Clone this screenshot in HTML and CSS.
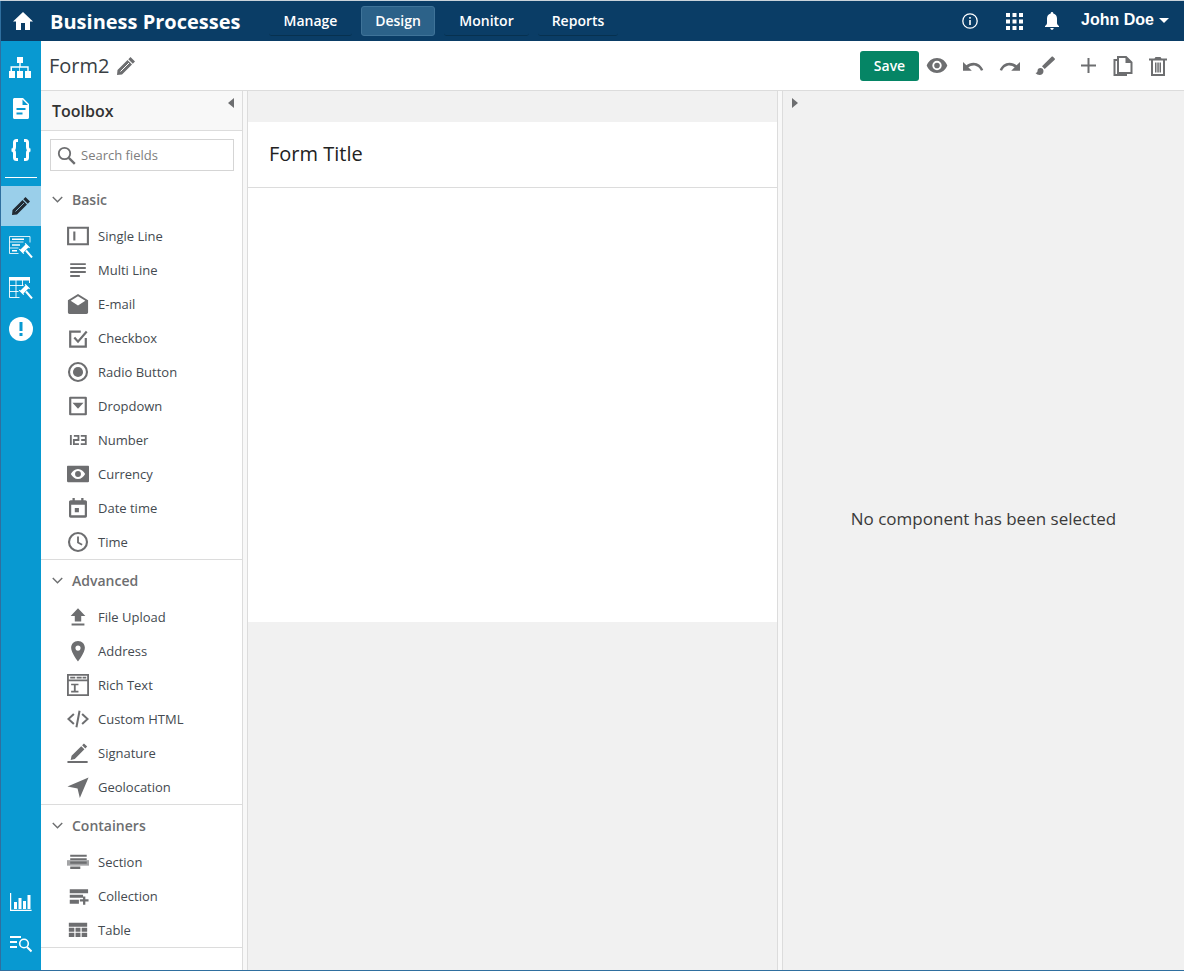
FILE: index.html
```html
<!DOCTYPE html>
<html>
  <head>
    <title>Business Processes</title>
    <link rel="stylesheet" href="styles.css">
  </head>
  <body>
    <div class="app">
      <!-- Top bar -->
      <header class="topbar">
        <svg class="home_icon" viewBox="0 0 24 24"><path d="M10 21v-7h4v7h5v-8.500h3L12 3 2 12.500h3V21z"/></svg>
        <div class="brand">Business Processes</div>
        <nav class="nav">
          <a class="nav_item nav_manage">Manage</a>
          <a class="nav_item nav_design nav_active">Design</a>
          <a class="nav_item nav_monitor">Monitor</a>
          <a class="nav_item nav_reports">Reports</a>
        </nav>
        <div class="topbar_right">
          <svg class="info_icon" viewBox="0 0 18 18"><circle cx="9" cy="9" r="7.200" fill="none" stroke="#fff" stroke-width="1.300"/><rect x="8.200" y="8" width="1.600" height="5" fill="#fff"/><rect x="8.200" y="5" width="1.600" height="1.700" fill="#fff"/></svg>
          <svg class="apps_icon" viewBox="0 0 17 17"><path d="M0 0h4v4H0zM6.500 0h4v4h-4zM13 0h4v4h-4zM0 6.500h4v4H0zM6.500 6.500h4v4h-4zM13 6.500h4v4h-4zM0 13h4v4H0zM6.500 13h4v4h-4zM13 13h4v4h-4z"/></svg>
          <svg class="bell_icon" viewBox="0 0 16 18"><path d="M8 0c-.8 0-1.300.6-1.300 1.400C4.300 2 3 4 3 6.500V11c0 1.500-1 2.400-2 3v1h14v-1c-1-.6-2-1.500-2-3V6.500c0-2.500-1.300-4.500-3.700-5.100C9.300.6 8.800 0 8 0zM6.300 16c0 1 .8 1.800 1.700 1.800s1.700-.8 1.700-1.800z"/></svg>
          <div class="user">John Doe<span class="caret"></span></div>
        </div>
      </header>

      <div class="main">
        <!-- Left rail -->
        <aside class="rail">
          <div class="rail_top">
            <div class="rail_btn">
              <svg class="rail_org" width="22" height="21" viewBox="0 0 22 21"><path class="rail_fill" d="M8 0h6v6h-2.300v3.300h8v4.700h2.300v7h-6v-7h2.300v-3.200h-7.300V14H14v7H8v-7h2.300v-3.200H3v3.200h2.300h.7v7H0v-7h1.500V9.300h8.800V6H8z"/></svg>
            </div>
            <div class="rail_btn">
              <svg width="16" height="21" viewBox="0 0 16 21"><path class="rail_fill" fill-rule="evenodd" d="M1.500 0H10l6 6v13.500c0 .8-.7 1.500-1.500 1.500h-13C.7 21 0 20.300 0 19.500v-18C0 .7.700 0 1.500 0zM9.500 1.500V7H15zM3.500 10v2h9v-2zM3.500 14.500v2h6v-2z"/></svg>
            </div>
            <div class="rail_btn">
              <svg width="24" height="22" viewBox="0 0 24 22" fill="none" stroke="#fff" stroke-width="3"><path d="M9 1.500H7.500C6 1.500 5.500 2 5.500 3.500V8c0 1.800-1 3-3 3 2 0 3 1.200 3 3v4.500c0 1.500.5 2 2 2H9M15 1.500h1.500c1.500 0 2 .5 2 2V8c0 1.800 1 3 3 3-2 0-3 1.200-3 3v4.500c0 1.500-.5 2-2 2H15"/></svg>
            </div>
            <div class="rail_sep"></div>
            <div class="rail_btn rail_active">
              <svg width="18" height="18" viewBox="0 0 18 18"><path fill="#222b33" d="M13.500 0L18 4.500l-2.200 2.200-4.500-4.500zM10.500 3L15 7.500 5 17.500 0 18l.5-5z"/><path stroke="#9acfea" stroke-width=".8" d="M3.500 14.500l8.500-8.500"/></svg>
            </div>
            <div class="rail_btn">
              <svg width="24" height="22" viewBox="0 0 24 22" fill="none" stroke="#fff"><path stroke-width="1" opacity=".85" d="M.5.500h20.500v6M.5.500v17h9M.5 6h14M.5 12h9"/><path stroke-width="1.500" d="M3 3.200h12M3 9h8M3 14.800h5"/><path fill="#fff" stroke="none" d="M16.500 7l4.500 4.500-.8.800-.8-.8-5 5 .8.800-.8.800-4.500-4.500.8-.8.800.8 5-5-.8-.800z"/><path stroke-width="2" d="M17 14.500l6 7"/></svg>
            </div>
            <div class="rail_btn">
              <svg width="24" height="22" viewBox="0 0 24 22" fill="none" stroke="#fff"><path fill="#fff" stroke="none" d="M0 0h21v3.500H0z"/><path stroke-width="1" opacity=".9" d="M.5 3v17.500h10M20.500 3v3M.5 8.500h14M.5 14.500h9M7 3v17.500M13.500 3v6"/><path fill="#fff" stroke="none" d="M16.500 7l4.500 4.500-.8.800-.8-.8-5 5 .8.800-.8.800-4.500-4.500.8-.8.800.8 5-5-.8-.800z"/><path stroke-width="2" d="M17 14.500l6 7"/></svg>
            </div>
            <div class="rail_btn">
              <svg width="24" height="24" viewBox="0 0 24 24"><circle cx="12" cy="12" r="12" fill="#fff"/><rect x="10.500" y="5" width="3" height="9" fill="#0899d1"/><rect x="10.500" y="16" width="3" height="3" fill="#0899d1"/></svg>
            </div>
          </div>
          <div class="rail_bottom">
            <svg width="22" height="19" viewBox="0 0 22 19" fill="none"><path stroke="#fff" stroke-width="1.200" d="M.6 0v17.400h21"/><path fill="#fff" d="M4 9h3v7H4zM8.500 5h3v11h-3zM13 8h3v8h-3zM17.500 2h3v14h-3z"/></svg>
            <svg width="22" height="18" viewBox="0 0 22 18" fill="none" stroke="#fff"><path stroke-width="2" d="M0 2h11M0 7h7M0 12h7"/><circle cx="14" cy="8.500" r="4.300" stroke-width="1.600"/><path stroke-width="2" d="M17 12l4.500 4.500"/></svg>
          </div>
        </aside>

        <div class="workspace">
          <!-- Form toolbar -->
          <div class="formbar">
            <div class="form_name">Form2</div>
            <svg class="form_pencil" viewBox="0 0 18 18"><path fill="#6d6e70" d="M13.500 0L18 4.500l-2.200 2.200-4.500-4.500zM10.500 3L15 7.500 5 17.500 0 18l.5-5z"/><path stroke="#fff" stroke-width="1" d="M3.500 14.500l8.500-8.500"/></svg>
            <div class="formbar_right">
              <button class="save_btn">Save</button>
              <svg class="tool_icon tool_eye" viewBox="1 0 22 16"><path fill-rule="evenodd" d="M12 0C7 0 2.700 3.200 1 8c1.700 4.800 6 8 11 8s9.300-3.200 11-8c-1.700-4.800-6-8-11-8zm0 13a5 5 0 1 1 0-10 5 5 0 0 1 0 10zm0-8a3 3 0 1 0 0 6 3 3 0 0 0 0-6z"/></svg>
              <svg class="tool_icon tool_undo" viewBox="0 0 22 12"><path d="M11 2.500C8 2.500 5.500 3.600 3.600 5.300L0 1.800V11h9.200L5.600 7.400c1.400-1.200 3.300-2 5.400-2 3.600 0 6.700 2.400 7.800 5.600l2.400-.8C19.700 5.800 15.700 2.500 11 2.500z"/></svg>
              <svg class="tool_icon tool_redo" viewBox="0 0 22 12"><path d="M11 2.500c3 0 5.500 1.100 7.400 2.800L22 1.800V11h-9.200l3.600-3.600c-1.400-1.200-3.300-2-5.400-2-3.600 0-6.700 2.400-7.800 5.600L.8 10.200C2.300 5.800 6.300 2.500 11 2.500z"/></svg>
              <svg class="tool_icon tool_brush" viewBox="0 0 20 20"><path d="M5.500 12C3.600 12 2.500 13.300 2.500 15c0 1.300-1.100 2-2 2 .9 1.300 2.700 2 4 2 2.400 0 4-1.600 4-4 0-1.700-1.300-3-3-3zM19.700 2.400L18 .7c-.4-.4-1-.4-1.400 0L7 10.300l2.700 2.700 10-9.300c.4-.4.400-1 0-1.300z"/></svg>
              <svg class="tool_icon tool_plus" viewBox="0 0 15 15"><path d="M6.500 0h2v6.500H15v2H8.500V15h-2V8.500H0v-2h6.500z"/></svg>
              <svg class="tool_icon tool_copy" viewBox="0 0 20 20"><path fill="none" stroke="#6d6e70" stroke-width="2" d="M5 4H1.500v15H13v-2M5 1v16h13.500V6.500L13 1z"/><path d="M12.500 1l6 6h-6z"/></svg>
              <svg class="tool_icon tool_trash" viewBox="0 0 18 20"><path fill="none" stroke="#6d6e70" stroke-width="2" d="M3 4v15h12V4"/><path d="M0 2.500h5.500L6.500 1h5l1 1.500H18v2H0zM6 6.500h1.500v10H6zM8.300 6.500h1.500v10H8.300zM10.500 6.500H12v10h-1.500z"/></svg>
            </div>
          </div>

          <div class="panes">
            <!-- Toolbox -->
            <div class="toolbox">
              <div class="toolbox_head">Toolbox<span class="arrow_left"></span></div>
              <div class="toolbox_search">
                <div class="search_box">
                  <svg width="19" height="19" viewBox="0 0 19 19" fill="none" stroke="#6d6e70"><circle cx="7.500" cy="7.500" r="5.700" stroke-width="1.800"/><path stroke-width="2.400" d="M11.800 11.800l6 6"/></svg>
                  <span>Search fields</span>
                </div>
              </div>

              <div class="group group_basic">
                <div class="group_title"><svg class="chev" viewBox="0 0 10 6"><path d="M.7.700L5 5l4.300-4.300" fill="none" stroke="#6d6e70" stroke-width="1.300"/></svg>Basic</div>
                <div class="field"><svg viewBox="0 0 24 24"><path fill="none" stroke-width="2.300" d="M1.200 3h21.600v18H1.200zM8 7v10"/></svg>Single Line</div>
                <div class="field"><svg viewBox="0 0 24 24"><path d="M3.500 4.500h17v2.100h-17zM3.500 8.800h17v2.100h-17zM3.500 13.100h17v2.100h-17zM3.500 17.400h10.500v2.100H3.500z"/></svg>Multi Line</div>
                <div class="field"><svg viewBox="0 0 24 24"><path fill-rule="evenodd" d="M12 1l11 6.800V21c0 1-.8 1.800-1.800 1.800H2.800C1.800 22.800 1 22 1 21V7.800zM12 3.500L4 8.400l8 5.200 8-5.200z"/></svg>E-mail</div>
                <div class="field"><svg viewBox="0 0 24 24"><path fill="none" stroke-width="2.400" d="M20.500 12v9.500H3.500V5H15M8 11.500l4 4.500 9.500-11"/></svg>Checkbox</div>
                <div class="field"><svg viewBox="0 0 24 24"><circle cx="12" cy="12" r="9.800" fill="none" stroke-width="2.300"/><circle cx="12" cy="12" r="5.500"/></svg>Radio Button</div>
                <div class="field"><svg viewBox="0 0 24 24"><path fill="none" stroke-width="2.400" stroke-linejoin="round" d="M3.500 3h17v18h-17z"/><path d="M6 8.500h12l-6 6.500z"/></svg>Dropdown</div>
                <div class="field"><svg viewBox="0 0 24 24"><path fill="none" stroke-width="2" d="M4.200 6.500v11M7.500 7.500h5v4.500h-5v4.500h5.500M15 7.500h5.500v9H15M15.500 12h5"/></svg>Number</div>
                <div class="field"><svg viewBox="0 0 24 24"><path fill-rule="evenodd" d="M1 3h22c.5 0 1 .5 1 1v16c0 .5-.5 1-1 1H1c-.5 0-1-.5-1-1V4c0-.5.500-1 1-1zM12 6.500C8.500 6.500 6 9 4.200 12 6 15 8.500 17.500 12 17.500s6-2.500 7.800-5.500C18 9 15.500 6.500 12 6.500zm0 2.300a3.200 3.200 0 1 1 0 6.400 3.200 3.200 0 0 1 0-6.400z"/></svg>Currency</div>
                <div class="field"><svg viewBox="0 0 24 24"><path fill-rule="evenodd" d="M6 1h2.500v2.500h7V1H18v2.500h2c1 0 1.800.8 1.800 1.800v15.400c0 1-.8 1.800-1.800 1.800H4c-1 0-1.800-.8-1.800-1.800V5.300c0-1 .8-1.800 1.800-1.800h2zM4.600 8.500v11.500h14.800V8.500zM8.500 12h4.500v4.500H8.500z"/></svg>Date time</div>
                <div class="field"><svg viewBox="0 0 24 24"><circle cx="12" cy="12" r="9.800" fill="none" stroke-width="2.300"/><path fill="none" stroke-width="2" d="M12 6v6.500l4.500 2.500"/></svg>Time</div>
              </div>

              <div class="group group_advanced">
                <div class="group_title"><svg class="chev" viewBox="0 0 10 6"><path d="M.7.700L5 5l4.300-4.300" fill="none" stroke="#6d6e70" stroke-width="1.300"/></svg>Advanced</div>
                <div class="field"><svg viewBox="0 0 24 24"><path d="M12 2.500L20 11h-4.500v6h-7v-6H4zM5 19h14v2.400H5z"/></svg>File Upload</div>
                <div class="field"><svg viewBox="0 0 24 24"><path fill-rule="evenodd" d="M12 1C7.500 1 4.500 4.400 4.500 8.500c0 5.200 7.500 15 7.500 15s7.500-9.800 7.500-15C19.500 4.400 16.500 1 12 1zm0 5a2.800 2.800 0 1 1 0 5.600A2.800 2.800 0 0 1 12 6z"/></svg>Address</div>
                <div class="field"><svg viewBox="0 0 24 24"><path fill-rule="evenodd" d="M0 0h24v24H0zM2 2v4h20V2zM2 8v14h20V8z"/><path d="M3.500 3h5.500v2H3.500zM10.500 3h5.500v2h-5.500zM17 3h4v2h-4zM4.500 10.500h8v1.800h-3v6h3v1.800h-8v-1.800h3v-6h-3z"/></svg>Rich Text</div>
                <div class="field"><svg viewBox="0 0 24 24"><path fill="none" stroke-width="2.200" d="M7.500 6.500L1.500 12l6 5.500M16.500 6.500l6 5.500-6 5.500M13.700 3l-3.400 18"/></svg>Custom HTML</div>
                <div class="field"><svg viewBox="0 0 24 24"><path d="M18.500 1.500L22 5l-2 2-3.500-3.500zM15.500 4.500L19 8 8.500 18.500l-4.500 1 1-4.500zM.5 20.800h22v2.200H.5z"/></svg>Signature</div>
                <div class="field"><svg viewBox="0 0 24 24"><path d="M23.500 1.500L14 24l-2.500-10.500L.5 11.500z"/></svg>Geolocation</div>
              </div>

              <div class="group group_containers">
                <div class="group_title"><svg class="chev" viewBox="0 0 10 6"><path d="M.7.700L5 5l4.300-4.300" fill="none" stroke="#6d6e70" stroke-width="1.300"/></svg>Containers</div>
                <div class="field"><svg viewBox="0 0 24 24"><path d="M3.500 4h18v2.400h-18zM3.500 7.800h18v2.200h-18z"/><path fill="#a3a4a6" d="M0 10h24v6H0z"/><path d="M3.500 11.500h18v2.500h-18zM3.500 17h11v2.500h-11z"/></svg>Section</div>
                <div class="field"><svg viewBox="0 0 24 24"><path d="M3 4.500h20V9H3zM3 10.500h14.500V14H3zM3 16h10v4.500H3zM17.500 12.500h2.500v3h3.500V18H20v3.500h-2.500V18H14v-2.500h3.500z"/></svg>Collection</div>
                <div class="field"><svg viewBox="0 0 24 24"><path d="M2 4h20v4.500H2zM2 9.500h6v4.500H2zM9.300 9.500h5.400v4.500H9.300zM16 9.500h6v4.500h-6zM2 15h6v4.500H2zM9.300 15h5.400v4.500H9.300zM16 15h6v4.500h-6z"/></svg>Table</div>
              </div>
            </div>

            <div class="splitter"></div>

            <!-- Form canvas -->
            <div class="canvas">
              <div class="form_card">
                <div class="form_title">Form Title</div>
              </div>
            </div>

            <div class="splitter splitter_right"></div>

            <!-- Properties -->
            <div class="props">
              <span class="arrow_right"></span>
              <div class="props_empty">No component has been selected</div>
            </div>
          </div>
        </div>
      </div>
    </div>
  </body>
</html>
```

FILE: styles.css
```css
html, body
  {
  margin: 0;
  padding: 0;
  height: 100%;
  }

body
  {
  font-family: "Open Sans", "Liberation Sans", sans-serif;
  color: #333;
  overflow: hidden;
  }

.app
  {
  width: 1184px;
  height: 971px;
  display: flex;
  flex-direction: column;
  box-sizing: border-box;
  border-top: 1px solid #c9d3db;
  border-bottom: 1px solid #2f6f9f;
  }

/* Top bar */

.topbar
  {
  height: 40px;
  flex: none;
  background: #0a3d66;
  display: flex;
  align-items: center;
  color: #fff;
  border-left: 1px solid #2f6f9f;
  }

.home_icon
  {
  width: 24px;
  height: 24px;
  fill: #fff;
  margin-left: 10px;
  }

.brand
  {
  font-size: 20px;
  font-weight: 700;
  margin-left: 15px;
  width: 219px;
  white-space: nowrap;
  }

.nav
  {
  display: flex;
  align-items: center;
  gap: 9px;
  height: 100%;
  }

.nav_item
  {
  height: 30px;
  box-sizing: border-box;
  font-size: 14px;
  font-weight: 600;
  line-height: 30px;
  text-align: center;
  border-radius: 3px;
  border-bottom: 1px solid #07314f;
  }

.nav_manage { width: 83px; }
.nav_design { width: 74px; }
.nav_monitor { width: 85px; }
.nav_reports { width: 80px; }

.nav_active
  {
  background: #2c6289;
  border: 1px solid #3f7398;
  line-height: 28px;
  }

.topbar_right
  {
  margin-left: auto;
  display: flex;
  align-items: center;
  }

.info_icon
  {
  width: 18px;
  height: 18px;
  }

.apps_icon
  {
  width: 17px;
  height: 17px;
  fill: #fff;
  margin-left: 27px;
  }

.bell_icon
  {
  width: 16px;
  height: 18px;
  fill: #fff;
  margin-left: 21px;
  }

.user
  {
  font-family: "Liberation Sans", sans-serif;
  font-size: 16px;
  font-weight: 700;
  margin-left: 21px;
  margin-bottom: 3px;
  width: 103px;
  display: flex;
  align-items: center;
  }

.caret
  {
  width: 0;
  height: 0;
  margin-left: 5px;
  margin-top: 2px;
  border-left: 5px solid transparent;
  border-right: 5px solid transparent;
  border-top: 5px solid #fff;
  }

.main
  {
  flex: 1;
  display: flex;
  min-height: 0;
  }

/* Left rail */

.rail
  {
  width: 41px;
  flex: none;
  box-sizing: border-box;
  background: #0899d1;
  border-left: 1px solid #2f6f9f;
  display: flex;
  flex-direction: column;
  justify-content: space-between;
  }

.rail_top
  {
  display: flex;
  flex-direction: column;
  padding-top: 6px;
  }

.rail_btn
  {
  height: 41px;
  display: flex;
  align-items: center;
  justify-content: center;
  }

.rail_org
  {
  margin-right: 2px;
  }

.rail_fill
  {
  fill: #fff;
  }

.rail_sep
  {
  height: 1px;
  margin: 7px 4px 8px 4px;
  background: #fff;
  }

.rail_active
  {
  height: 40px;
  background: #9acfea;
  }

.rail_bottom
  {
  display: flex;
  flex-direction: column;
  align-items: center;
  gap: 23px;
  padding-bottom: 17px;
  }

/* Form toolbar */

.workspace
  {
  flex: 1;
  display: flex;
  flex-direction: column;
  min-width: 0;
  }

.formbar
  {
  height: 49px;
  flex: none;
  background: #fff;
  border-bottom: 1px solid #dcdcdc;
  display: flex;
  align-items: center;
  padding-left: 8px;
  }

.form_name
  {
  font-size: 20px;
  color: #3a3f44;
  }

.form_pencil
  {
  width: 18px;
  height: 18px;
  margin-left: 8px;
  }

.formbar_right
  {
  margin-left: auto;
  display: flex;
  align-items: center;
  }

.save_btn
  {
  width: 59px;
  height: 30px;
  border: 0;
  border-radius: 3px;
  background: #058565;
  color: #fff;
  font-family: "Open Sans", sans-serif;
  font-size: 14px;
  font-weight: 600;
  padding: 0;
  }

.tool_icon
  {
  fill: #6d6e70;
  }

.tool_eye { width: 22px; height: 15px; margin-left: 7px; }
.tool_undo { width: 21px; height: 12px; margin-left: 15px; }
.tool_redo { width: 21px; height: 12px; margin-left: 15px; }
.tool_brush { width: 20px; height: 20px; margin-left: 15px; }
.tool_plus { width: 15px; height: 15px; margin-left: 26px; }
.tool_copy { width: 20px; height: 20px; margin-left: 17px; }
.tool_trash { width: 18px; height: 20px; margin-left: 16px; margin-right: 17px; }

/* Panes */

.panes
  {
  flex: 1;
  display: flex;
  min-height: 0;
  }

.toolbox
  {
  width: 202px;
  flex: none;
  box-sizing: border-box;
  background: #fff;
  border-right: 1px solid #dcdcdc;
  }

.toolbox_head
  {
  height: 40px;
  box-sizing: border-box;
  background: #f8f8f8;
  border-bottom: 1px solid #dcdcdc;
  font-size: 16px;
  font-weight: 600;
  line-height: 40px;
  padding-left: 11px;
  position: relative;
  }

.arrow_left
  {
  position: absolute;
  right: 8px;
  top: 7px;
  width: 0;
  height: 0;
  border-top: 5px solid transparent;
  border-bottom: 5px solid transparent;
  border-right: 6px solid #6d6e70;
  }

.toolbox_search
  {
  padding: 8px 8px 0 9px;
  }

.search_box
  {
  height: 32px;
  box-sizing: border-box;
  border: 1px solid #d5d5d5;
  display: flex;
  align-items: center;
  padding-left: 6px;
  font-size: 13px;
  color: #7d7d7d;
  }

.search_box span
  {
  margin-left: 5px;
  }

.group
  {
  border-bottom: 1px solid #dcdcdc;
  }

.group_basic
  {
  margin-top: 9px;
  }

.group_title
  {
  height: 39px;
  display: flex;
  align-items: center;
  font-size: 14px;
  font-weight: 600;
  color: #6d6e70;
  padding-left: 11px;
  }

.group_advanced .group_title,
.group_containers .group_title
  {
  height: 40px;
  padding-top: 1px;
  box-sizing: border-box;
  }

.chev
  {
  width: 11px;
  height: 7px;
  margin-right: 9px;
  }

.field
  {
  height: 34px;
  display: flex;
  align-items: center;
  font-size: 13px;
  color: #444a50;
  padding-left: 26px;
  }

.field svg
  {
  width: 22px;
  height: 22px;
  fill: #6d6e70;
  stroke: #6d6e70;
  stroke-width: 0;
  margin-right: 9px;
  }

/* Canvas */

.splitter
  {
  width: 4px;
  flex: none;
  background: #f8f8f8;
  border-right: 1px solid #dcdcdc;
  }

.splitter_right
  {
  border-left: 1px solid #dcdcdc;
  }

.canvas
  {
  width: 529px;
  flex: none;
  background: #f1f1f1;
  padding-top: 31px;
  box-sizing: border-box;
  }

.form_card
  {
  height: 500px;
  background: #fff;
  }

.form_title
  {
  height: 66px;
  box-sizing: border-box;
  border-bottom: 1px solid #dcdcdc;
  font-size: 20px;
  line-height: 63px;
  padding-left: 21px;
  color: #222;
  }

/* Properties */

.props
  {
  flex: 1;
  background: #f1f1f1;
  display: flex;
  align-items: center;
  justify-content: center;
  position: relative;
  box-sizing: border-box;
  padding-bottom: 24px;
  }

.props_empty
  {
  font-size: 17px;
  color: #3a3a3a;
  }

.arrow_right
  {
  position: absolute;
  left: 9px;
  top: 7px;
  width: 0;
  height: 0;
  border-top: 5px solid transparent;
  border-bottom: 5px solid transparent;
  border-left: 6px solid #6d6e70;
  }
```
